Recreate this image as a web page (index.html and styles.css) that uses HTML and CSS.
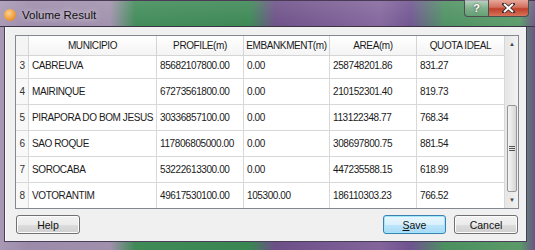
FILE: index.html
```html
<!DOCTYPE html>
<html lang="en">
<head>
    <meta charset="UTF-8">
    <meta name="viewport" content="width=device-width, initial-scale=1.0">
    <title>Volume Result</title>
    <link rel="stylesheet" href="styles.css">
</head>
<body>
    <div class="window">
        <div class="titlebar">
            <span class="app-icon"></span>
            <span class="title">Volume Result</span>
            <div class="caption-buttons">
                <span class="cap-btn help-cap">?</span>
                <span class="cap-btn close-cap">
                    <svg width="13" height="10" viewBox="0 0 13 10">
                        <path d="M2 1 L11 9 M11 1 L2 9" stroke="#3a2a2a" stroke-width="3.6" stroke-linecap="square"/>
                        <path d="M2 1 L11 9 M11 1 L2 9" stroke="#fff" stroke-width="2"/>
                    </svg>
                </span>
            </div>
        </div>

        <div class="client">
            <div class="table-frame">
                <div class="table">
                    <div class="row header-row">
                        <div class="cell corner"></div>
                        <div class="cell">MUNICIPIO</div>
                        <div class="cell">PROFILE(m)</div>
                        <div class="cell">EMBANKMENT(m)</div>
                        <div class="cell">AREA(m)</div>
                        <div class="cell">QUOTA IDEAL</div>
                    </div>
                    <div class="table-body">
                        <div class="rows">
                            <div class="row">
                                <div class="cell num">3</div>
                                <div class="cell">CABREUVA</div>
                                <div class="cell">85682107800.00</div>
                                <div class="cell">0.00</div>
                                <div class="cell">258748201.86</div>
                                <div class="cell">831.27</div>
                            </div>
                            <div class="row">
                                <div class="cell num">4</div>
                                <div class="cell">MAIRINQUE</div>
                                <div class="cell">67273561800.00</div>
                                <div class="cell">0.00</div>
                                <div class="cell">210152301.40</div>
                                <div class="cell">819.73</div>
                            </div>
                            <div class="row">
                                <div class="cell num">5</div>
                                <div class="cell">PIRAPORA DO BOM JESUS</div>
                                <div class="cell">30336857100.00</div>
                                <div class="cell">0.00</div>
                                <div class="cell">113122348.77</div>
                                <div class="cell">768.34</div>
                            </div>
                            <div class="row">
                                <div class="cell num">6</div>
                                <div class="cell">SAO ROQUE</div>
                                <div class="cell">117806805000.00</div>
                                <div class="cell">0.00</div>
                                <div class="cell">308697800.75</div>
                                <div class="cell">881.54</div>
                            </div>
                            <div class="row">
                                <div class="cell num">7</div>
                                <div class="cell">SOROCABA</div>
                                <div class="cell">53222613300.00</div>
                                <div class="cell">0.00</div>
                                <div class="cell">447235588.15</div>
                                <div class="cell">618.99</div>
                            </div>
                            <div class="row">
                                <div class="cell num">8</div>
                                <div class="cell">VOTORANTIM</div>
                                <div class="cell">49617530100.00</div>
                                <div class="cell">105300.00</div>
                                <div class="cell">186110303.23</div>
                                <div class="cell">766.52</div>
                            </div>
                        </div>
                    </div>
                </div>
                <div class="scrollbar">
                    <div class="arrow">&#9650;</div>
                    <div class="track">
                        <div class="thumb"><span class="grip"></span></div>
                    </div>
                    <div class="arrow">&#9660;</div>
                </div>
            </div>

            <div class="button-row">
                <button class="btn">Help</button>
                <div class="spacer"></div>
                <button class="btn default"><u>S</u>ave</button>
                <button class="btn">Cancel</button>
            </div>
        </div>
    </div>
</body>
</html>
```

FILE: styles.css
```css
body {
    margin: 0;
    font-family: 'Liberation Sans', Arial, sans-serif;
    background: #6a4e84;
}
.window {
    width: 535px;
    height: 250px;
    box-sizing: border-box;
    display: flex;
    flex-direction: column;
    padding: 0 8px 8px 4px;
    background:
        linear-gradient(to bottom, rgba(255, 255, 255, 0.12), rgba(0, 0, 0, 0) 30px),
        linear-gradient(to right, #a898b4 0, #9c8aaa 28px, #a090ac 110px, #3f8a57 135px, #3a8652 250px, #6c4f87 275px, #83659c 380px, #6f5390 410px, #4c9060 445px, #5a9a68 520px, #6b5486 535px);
    border-top: 1px solid #4a3a55;
}
.titlebar {
    height: 25px;
    display: flex;
    align-items: center;
    border-bottom: 1px solid #3b3446;
    margin-right: -8px;
    margin-left: -4px;
    padding-left: 4px;
    position: relative;
}
.app-icon {
    width: 12px;
    height: 12px;
    border-radius: 50%;
    background: radial-gradient(circle at 40% 35%, #fbd38a, #ef9a3a 60%, #d27a20);
    margin-top: 2px;
}
.title {
    margin-left: 6px;
    margin-top: 2px;
    font-size: 11.5px;
    color: #111;
    text-shadow: 0 0 6px rgba(255, 255, 255, 0.9);
}
.caption-buttons {
    position: absolute;
    top: -1px;
    right: 6px;
    display: flex;
}
.cap-btn {
    height: 17px;
    display: flex;
    align-items: center;
    justify-content: center;
    border: 1px solid #4b4f52;
    border-top: none;
    box-sizing: border-box;
}
.help-cap {
    width: 25px;
    border-radius: 0 0 0 4px;
    background: linear-gradient(to bottom, rgba(255, 255, 255, 0.55), rgba(255, 255, 255, 0.2) 50%, rgba(255, 255, 255, 0.05));
    color: #fff;
    font-weight: bold;
    font-size: 11px;
    text-shadow: 0 0 2px #333;
}
.close-cap {
    width: 40px;
    border-left: none;
    border-radius: 0 0 4px 0;
    background: linear-gradient(to bottom, #e8a89a, #d2705e 45%, #c0402a 55%, #d7735a);
}
.client {
    flex: 1;
    background: #f0f0f0;
    padding: 8px 7px 0 10px;
    border: 1px solid #4a3f58;
    border-top: none;
    box-shadow: inset 1px 0 0 #fff;
}
.table-frame {
    display: flex;
    border: 1px solid #828790;
    background: #fff;
    height: 172px;
}
.table {
    width: 489px;
    font-size: 10px;
    letter-spacing: -0.4px;
    color: #1a1a1a;
}
.row {
    display: grid;
    grid-template-columns: 13px 128px 87px 86px 87px 88px;
    height: 26px;
}
.cell {
    display: flex;
    align-items: center;
    padding-left: 3px;
    border-right: 1px solid #d8d8d8;
    border-bottom: 1px solid #d8d8d8;
    white-space: nowrap;
    overflow: hidden;
}
.header-row {
    height: 20px;
}
.header-row .cell {
    justify-content: center;
    padding-left: 0;
    background: linear-gradient(to bottom, #fff, #f4f4f4);
    border-color: #d5d5d5;
}
.header-row .corner {
    background: #f4f4f4;
}
.num {
    justify-content: center;
    padding-left: 0;
    background: #f8f8f8;
    color: #333;
}
.table-body {
    height: 152px;
    overflow: hidden;
}
.rows {
    margin-top: -3px;
}
.scrollbar {
    width: 15px;
    display: flex;
    flex-direction: column;
    background: linear-gradient(to right, #e6e6e6, #f2f2f2);
    border-left: 1px solid #e8e8e8;
}
.arrow {
    height: 16px;
    font-size: 6px;
    color: #444;
    display: flex;
    align-items: center;
    justify-content: center;
}
.track {
    flex: 1;
    display: flex;
    flex-direction: column;
    justify-content: flex-end;
}
.thumb {
    height: 85px;
    margin: 0 1px;
    border: 1px solid #979797;
    border-radius: 2px;
    background: linear-gradient(to right, #f4f4f4, #e6e6e6 50%, #d6d6d6);
    display: flex;
    align-items: center;
    justify-content: center;
}
.grip {
    width: 6px;
    height: 5px;
    background: repeating-linear-gradient(to bottom, #555 0, #555 1px, transparent 1px, transparent 2px);
}
.button-row {
    display: flex;
    gap: 8px;
    margin-top: 6px;
    padding: 0 1px;
}
.spacer {
    flex: 1;
}
.btn {
    width: 64px;
    height: 19px;
    padding: 0;
    font-family: 'Liberation Sans', Arial, sans-serif;
    font-size: 10.5px;
    color: #111;
    border: 1px solid #707070;
    border-radius: 3px;
    background: linear-gradient(to bottom, #f2f2f2 0, #ebebeb 50%, #dddddd 51%, #cfcfcf 100%);
    box-shadow: inset 0 0 0 1px #fcfcfc;
}
.btn.default {
    width: 63px;
    border-color: #3c7fb1;
    background: linear-gradient(to bottom, #eaf6fd 0, #d9f0fc 50%, #bee6fd 51%, #a7d9f5 100%);
    box-shadow: inset 0 0 0 1px #9fe8fb;
}
```
